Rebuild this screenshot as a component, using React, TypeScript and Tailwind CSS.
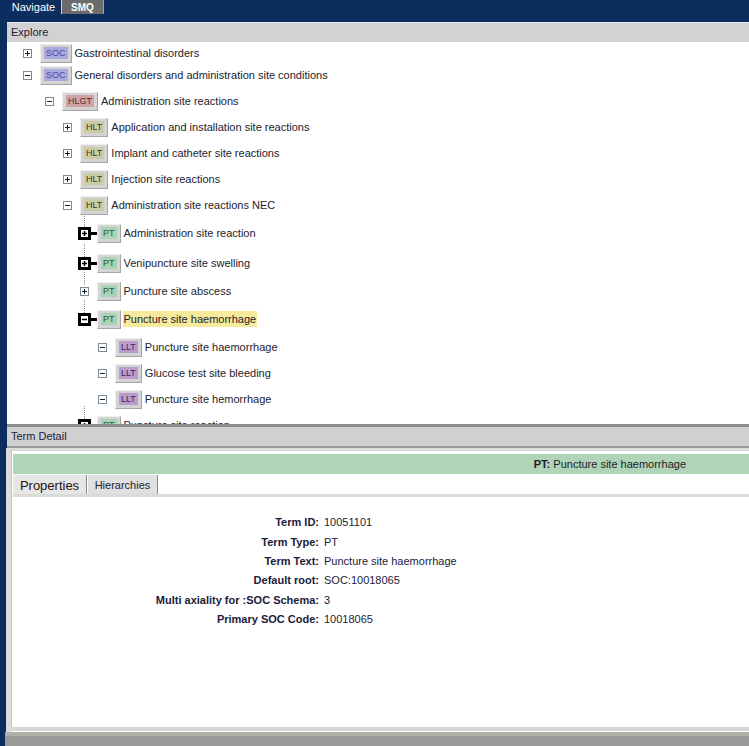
import React from "react";

type Kind = "SOC" | "HLGT" | "HLT" | "PT" | "LLT";

type TreeRow = {
  level: number;
  kind: Kind;
  text: string;
  open: boolean;
  bold?: boolean;
  highlight?: boolean;
  mt: string;
};

const ROWS: TreeRow[] = [
  { level: 0, kind: "SOC", text: "Gastrointestinal disorders", open: false, mt: "mt-0" },
  { level: 0, kind: "SOC", text: "General disorders and administration site conditions", open: true, mt: "mt-0" },
  { level: 1, kind: "HLGT", text: "Administration site reactions", open: true, mt: "mt-[4px]" },
  { level: 2, kind: "HLT", text: "Application and installation site reactions", open: false, mt: "mt-[4px]" },
  { level: 2, kind: "HLT", text: "Implant and catheter site reactions", open: false, mt: "mt-[4px]" },
  { level: 2, kind: "HLT", text: "Injection site reactions", open: false, mt: "mt-[4px]" },
  { level: 2, kind: "HLT", text: "Administration site reactions NEC", open: true, mt: "mt-[4px]" },
  { level: 3, kind: "PT", text: "Administration site reaction", open: false, bold: true, mt: "mt-[6px]" },
  { level: 3, kind: "PT", text: "Venipuncture site swelling", open: false, bold: true, mt: "mt-[8px]" },
  { level: 3, kind: "PT", text: "Puncture site abscess", open: false, mt: "mt-[6px]" },
  { level: 3, kind: "PT", text: "Puncture site haemorrhage", open: true, bold: true, highlight: true, mt: "mt-[6px]" },
  { level: 4, kind: "LLT", text: "Puncture site haemorrhage", open: true, mt: "mt-[6px]" },
  { level: 4, kind: "LLT", text: "Glucose test site bleeding", open: true, mt: "mt-[4px]" },
  { level: 4, kind: "LLT", text: "Puncture site hemorrhage", open: true, mt: "mt-[4px]" },
  { level: 3, kind: "PT", text: "Puncture site reaction", open: false, bold: true, mt: "mt-[4px]" },
];

const LEVEL_PAD = ["pl-[16px]", "pl-[38px]", "pl-[56px]", "pl-[73px]", "pl-[91px]"];

const BADGE: Record<Kind, string> = {
  SOC: "bg-[#a9a9dc] text-[#4a4ab0]",
  HLGT: "bg-[#cda3a3] text-[#6a2a2a]",
  HLT: "bg-[#cbcba4] text-[#3a3a2a]",
  PT: "bg-[#aad2b4] text-[#2d5a3d]",
  LLT: "bg-[#b89ccb] text-[#3d1f5a]",
};

const PROPS: [string, string][] = [
  ["Term ID:", "10051101"],
  ["Term Type:", "PT"],
  ["Term Text:", "Puncture site haemorrhage"],
  ["Default root:", "SOC:10018065"],
  ["Multi axiality for :SOC Schema:", "3"],
  ["Primary SOC Code:", "10018065"],
];

function Toggle({ open, bold }: { open: boolean; bold?: boolean }) {
  if (bold) {
    return (
      <div className="ml-[-2px] flex items-center">
        <svg width="13" height="13" viewBox="0 0 13 13" className="block">
          <rect x="1.5" y="1.5" width="10" height="10" fill="#fff" stroke="#000" strokeWidth="3" />
          <path d="M4 6.5h5" stroke="#000" strokeWidth="1.5" />
          {!open && <path d="M6.5 4v5" stroke="#000" strokeWidth="1.5" />}
        </svg>
        <div className="h-[3px] w-[6px] bg-black" />
      </div>
    );
  }
  return (
    <svg width="9" height="9" viewBox="0 0 9 9" className="block">
      <rect x="0.5" y="0.5" width="8" height="8" fill="#fff" stroke="#7d8b99" />
      <path d="M2 4.5h5" stroke="#1e1e1e" />
      {!open && <path d="M4.5 2v5" stroke="#1e1e1e" />}
    </svg>
  );
}

function Badge({ kind }: { kind: Kind }) {
  return (
    <span className="inline-flex border border-t-[#f0f0f0] border-l-[#f0f0f0] border-r-[#a4a4a4] border-b-[#a4a4a4] bg-[#d4d4d4] px-[3px] pt-[2px] pb-[3px]">
      <span className={`px-[2px] text-[9px] leading-[12px] ${BADGE[kind]}`}>{kind}</span>
    </span>
  );
}

function Row({ row }: { row: TreeRow }) {
  return (
    <div className={`flex h-[22px] items-center ${LEVEL_PAD[row.level]} ${row.mt}`}>
      <div className="relative flex h-full w-[17px] items-center">
        {row.level === 3 && (
          <span className="absolute left-[4px] top-[-8px] h-[13px] border-l border-dotted border-[#8a8a8a]" />
        )}
        <Toggle open={row.open} bold={row.bold} />
      </div>
      <Badge kind={row.kind} />
      {row.highlight ? (
        <span className="ml-[2px] whitespace-nowrap bg-[#f6eb9b] px-[1px] text-[11px] text-[#22222e]">{row.text}</span>
      ) : (
        <span className="ml-[3px] whitespace-nowrap text-[11px] text-[#22222e]">{row.text}</span>
      )}
    </div>
  );
}

export default function App() {
  return (
    <div className="flex h-[746px] w-[749px] flex-col overflow-hidden bg-[#0c2e5e] font-['Liberation_Sans',Arial,sans-serif]">
      <div className="flex h-[14px] shrink-0 pl-[6px]">
        <div className="flex w-[56px] items-center justify-center border-r border-[#c8d0dc] text-[11px] text-white">
          Navigate
        </div>
        <div className="flex w-[42px] items-center justify-center border-r border-[#9aa4b4] bg-[#6c6c6c] text-[10px] font-bold text-white">
          SMQ
        </div>
      </div>
      <div className="h-[8px] shrink-0" />

      <div className="ml-[7px] flex h-[20px] shrink-0 items-center border-t border-[#e8e8e8] bg-[#d2d2d2] pl-[4px] text-[11px] text-[#24203a]">
        Explore
      </div>

      <div className="ml-[7px] h-[382px] shrink-0 overflow-hidden bg-white">
        {ROWS.map((row, i) => (
          <Row key={i} row={row} />
        ))}
      </div>

      <div className="ml-[7px] h-[3px] shrink-0 bg-[#8e8e8e]" />
      <div className="ml-[7px] flex h-[21px] shrink-0 items-center border-b-2 border-[#9a9a9a] bg-[#d0d0d0] pl-[4px] text-[11px] text-[#24203a]">
        Term Detail
      </div>

      <div className="ml-[6px] flex flex-1 flex-col bg-[#dcdcdc] pt-[3px] pl-[5px]">
        <div className="flex flex-1 flex-col border-l border-[#c4c4c4] bg-white pt-[3px] pl-[1px]">
          <div className="flex h-[20px] items-center justify-end bg-[#b0d4b8] pr-[63px] text-[11px] text-[#1c1c2c]">
            <span className="font-bold">PT:</span>
            <span>&nbsp;Puncture site haemorrhage</span>
          </div>
          <div className="flex h-[23px] items-end border-b-[3px] border-[#dadada] pt-[1px]">
            <div className="flex h-full w-[74px] items-center justify-center border-r border-[#8a8a8a] bg-[#e6e6e6] pt-[3px] text-[13px] text-[#2b1010]">
              Properties
            </div>
            <div className="mb-[1px] ml-[1px] flex h-[19px] w-[70px] items-center justify-center self-start border-r border-[#8a8a8a] bg-[#e0e0e0] pt-[1px] text-[11px] text-[#22222e]">
              Hierarchies
            </div>
          </div>
          <div className="flex flex-1 flex-col pt-[16px] text-[11px] text-[#1a1a3a]">
            {PROPS.map(([label, value]) => (
              <div key={label} className="flex h-[19.3px] items-center">
                <span className="w-[306px] text-right font-bold">{label}</span>
                <span className="ml-[5px]">{value}</span>
              </div>
            ))}
          </div>
        </div>
        <div className="h-[4px] bg-[#d4d8d8]" />
        <div className="h-[1px] bg-white" />
      </div>
      <div className="ml-[5px] h-[14px] shrink-0 border-t-4 border-[#b0b0a8] bg-[#999999]" />
    </div>
  );
}
